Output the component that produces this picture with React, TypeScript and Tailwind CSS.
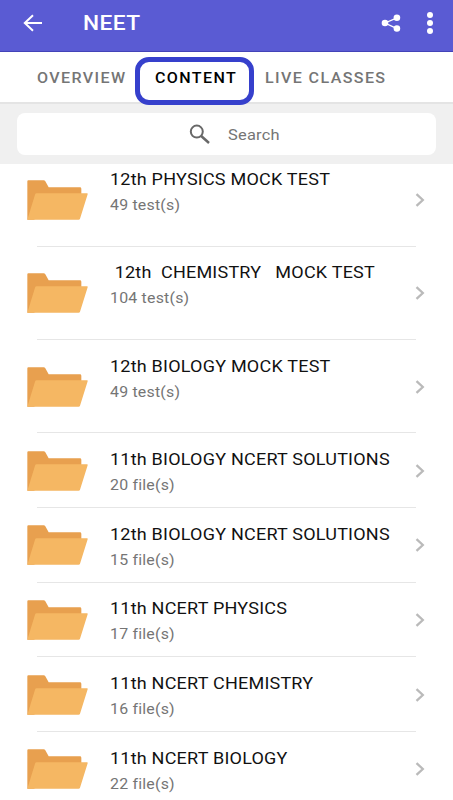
interface Folder {
  id: number
  title: string
  count: string
  tall?: boolean
}

const folders: Folder[] = [
  { id: 1, title: '12th PHYSICS MOCK TEST', count: '49 test(s)', tall: true },
  { id: 2, title: ' 12th  CHEMISTRY   MOCK TEST', count: '104 test(s)', tall: true },
  { id: 3, title: '12th BIOLOGY MOCK TEST', count: '49 test(s)', tall: true },
  { id: 4, title: '11th BIOLOGY NCERT SOLUTIONS', count: '20 file(s)' },
  { id: 5, title: '12th BIOLOGY NCERT SOLUTIONS', count: '15 file(s)' },
  { id: 6, title: '11th NCERT PHYSICS', count: '17 file(s)' },
  { id: 7, title: '11th NCERT CHEMISTRY', count: '16 file(s)' },
  { id: 8, title: '11th NCERT BIOLOGY', count: '22 file(s)' },
]

function FolderIcon() {
  return (
    <svg viewBox="0 0 183 120" className="h-10 w-[61px] shrink-0">
      <path d="M1 4Q1 1 4 1H50Q53 1 55 4L65 22H159Q163 22 163 26V60L20 119H1Z" fill="#e8a04f" />
      <path d="M29 40H180Q183 40 182 43L159 116Q158 119 155 119H1L24 44Q25 40 29 40Z" fill="#f5b763" />
    </svg>
  )
}

function Header() {
  return (
    <header className="flex h-[52px] shrink-0 items-center border-b border-[#4343b8] bg-[#5a5bd3] pb-[6px] text-white">
      <svg viewBox="0 0 20 18" className="ml-[23px] h-[18px] w-5" fill="none" stroke="currentColor" strokeWidth="2">
        <path d="M10 1.3L1.8 9L10 16.7M1.8 9H19" />
      </svg>
      <h1 className="ml-[40px] flex-1 origin-left scale-x-[1.08] pt-[3px] text-[21px] font-medium tracking-[0.4px]">NEET</h1>
      <svg viewBox="0 0 20 18" className="h-[18px] w-5" fill="currentColor">
        <path d="M16 3.8L4 9L16 14.6" fill="none" stroke="currentColor" strokeWidth="1.3" />
        <circle cx="4" cy="9" r="3.3" />
        <circle cx="15.9" cy="3.7" r="3.3" />
        <circle cx="15.9" cy="14.5" r="3.3" />
      </svg>
      <svg viewBox="0 0 8 24" className="mr-[19px] ml-[25px] h-6 w-2" fill="currentColor">
        <circle cx="4" cy="4" r="3" />
        <circle cx="4" cy="12" r="3" />
        <circle cx="4" cy="20" r="3" />
      </svg>
    </header>
  )
}

function TabLabel({ children }: { children: string }) {
  return <span className="inline-block origin-left scale-x-[1.07] tracking-[1.3px] whitespace-nowrap">{children}</span>
}

function Tabs() {
  return (
    <nav className="relative z-10 flex h-[52px] shrink-0 items-start border-b-2 border-[#e4e4e4] bg-white text-[15px] font-medium text-[#757575]">
      <button className="mt-[14px] ml-[37px] w-[98px] text-left leading-6">
        <TabLabel>OVERVIEW</TabLabel>
      </button>
      <button className="mt-[5px] h-[48px] w-[119px] rounded-[14px] border-[5px] border-[#3640cc] pb-[6px] pl-[15px] text-left leading-6 text-black">
        <TabLabel>CONTENT</TabLabel>
      </button>
      <button className="mt-[14px] ml-[11px] text-left leading-6">
        <TabLabel>LIVE CLASSES</TabLabel>
      </button>
    </nav>
  )
}

function SearchBar() {
  return (
    <div className="h-[60px] shrink-0 bg-[#f0f0f0] px-[17px] pt-[9px]">
      <div className="flex h-[42px] items-center rounded-lg bg-white pl-[172px] text-[#757575]">
        <svg viewBox="0 0 22 20" className="h-5 w-[22px]" fill="none" stroke="#686868" strokeWidth="2">
          <circle cx="7.8" cy="7.6" r="6" />
          <path d="M12.2 12L20 19" strokeWidth="2.5" />
        </svg>
        <span className="ml-[17px] origin-left scale-x-[1.06] pt-[3px] text-[15.5px] tracking-[0.2px]">Search</span>
      </div>
    </div>
  )
}

function FolderRow({ folder }: { folder: Folder }) {
  return (
    <li className={folder.tall ? 'h-[93.33px]' : 'h-[74.67px]'}>
      <div className="flex h-full pl-[27px]">
        <div className="flex items-center">
          <FolderIcon />
        </div>
        <div className="ml-[22px] min-w-0 flex-1 origin-left scale-x-[1.06] pt-[13.7px]">
          <p className="text-[17px] leading-6 tracking-[0.2px] whitespace-pre text-[#111]">{folder.title}</p>
          <p className="mt-[2px] text-[15px] leading-6 tracking-[0.2px] text-[#757575]">{folder.count}</p>
        </div>
        <div className="flex w-[38px] items-center">
          <svg viewBox="0 0 10 14" className="h-[14px] w-[10px]" fill="none" stroke="#bababa" strokeWidth="2.3">
            <path d="M1.5 1.2L7.8 7L1.5 12.8" />
          </svg>
        </div>
      </div>
      <div className="mx-[37px] -mt-px h-px bg-[#e6e6e6]" />
    </li>
  )
}

export default function App() {
  return (
    <div className="flex h-[800px] w-[453px] flex-col overflow-hidden bg-white font-['Roboto',sans-serif]">
      <Header />
      <Tabs />
      <SearchBar />
      <div className="min-h-0 flex-1 overflow-hidden">
        <ul className="-mt-[10.6px]">
          {folders.map(folder => (
            <FolderRow key={folder.id} folder={folder} />
          ))}
        </ul>
      </div>
    </div>
  )
}
